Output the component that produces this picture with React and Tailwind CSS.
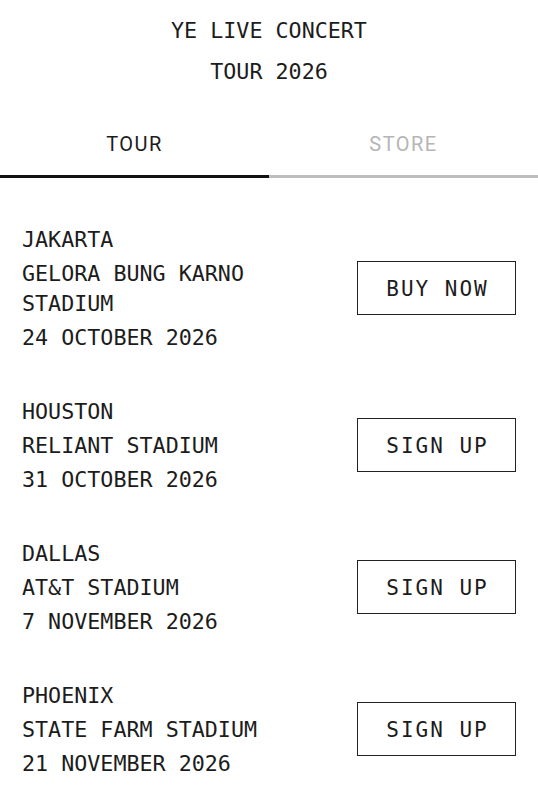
import { useState } from 'react';

const mono = { fontFamily: '"DejaVu Sans Mono", "Liberation Mono", monospace' };

const shows = [
  { city: 'JAKARTA', venue: 'GELORA BUNG KARNO STADIUM', date: '24 OCTOBER 2026', action: 'BUY NOW' },
  { city: 'HOUSTON', venue: 'RELIANT STADIUM', date: '31 OCTOBER 2026', action: 'SIGN UP' },
  { city: 'DALLAS', venue: 'AT&T STADIUM', date: '7 NOVEMBER 2026', action: 'SIGN UP' },
  { city: 'PHOENIX', venue: 'STATE FARM STADIUM', date: '21 NOVEMBER 2026', action: 'SIGN UP' },
];

export default function App() {
  const [tab, setTab] = useState('tour');

  return (
    <div className="min-h-screen w-full bg-white text-[#1c1c1c]">
      <header className="pt-[10px] text-center text-[21.7px] leading-[41px]" style={mono}>
        <div>YE LIVE CONCERT</div>
        <div>TOUR 2026</div>
      </header>

      <nav className="flex" style={{ fontFamily: 'Roboto, "Noto Sans", sans-serif' }}>
        <button
          className={`flex-1 pt-[37px] pb-[16px] text-[20px] leading-[30px] tracking-[1.5px] border-b-[3px] ${tab === 'tour' ? 'border-[#111] text-[#1c1c1c]' : 'border-[#bdbdbd] text-[#b5b5b5]'}`}
          onClick={() => setTab('tour')}
        >
          TOUR
        </button>
        <button
          className={`flex-1 pt-[37px] pb-[16px] text-[20px] leading-[30px] tracking-[1.5px] border-b-[3px] ${tab === 'store' ? 'border-[#111] text-[#1c1c1c]' : 'border-[#bdbdbd] text-[#b5b5b5]'}`}
          onClick={() => setTab('store')}
        >
          STORE
        </button>
      </nav>

      <div className="flex flex-col gap-[44px] px-[22px] pt-[47px] pb-10" style={mono}>
        {shows.map((show) => (
          <div key={show.city} className="flex items-center gap-[40px]">
            <div className="flex flex-1 flex-col gap-[4px] text-[21.7px] leading-[30px]">
              <div>{show.city}</div>
              <div>{show.venue}</div>
              <div>{show.date}</div>
            </div>
            <button className="-mt-[2px] flex h-[54px] w-[159px] shrink-0 items-center justify-center border-[1.5px] border-[#222] pt-[4px] pl-[2px] text-[21px] tracking-[2px]">
              {show.action}
            </button>
          </div>
        ))}
      </div>
    </div>
  );
}
